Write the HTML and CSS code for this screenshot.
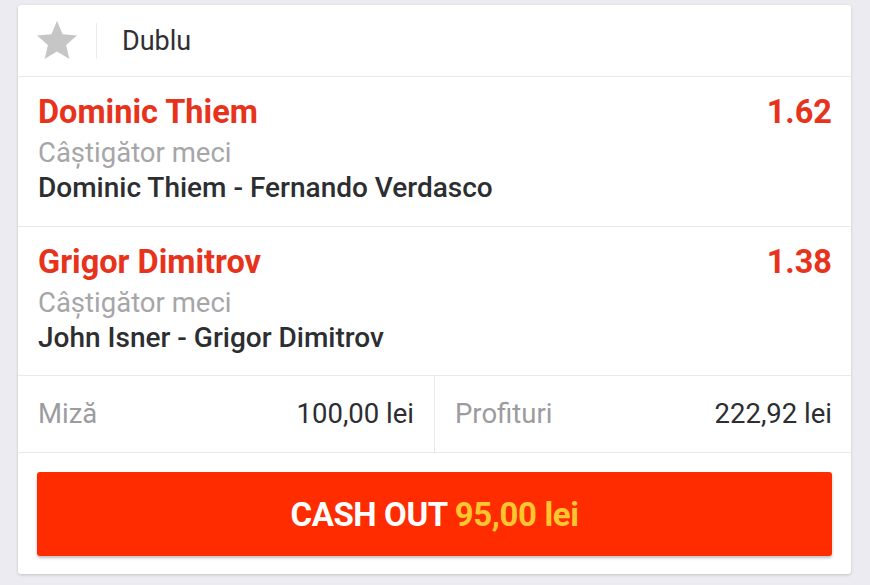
FILE: index.html
```html
<!DOCTYPE html>
<html lang="ro">
<head>
    <meta charset="UTF-8">
    <meta name="viewport" content="width=device-width, initial-scale=1.0">
    <title>Bilet - Dublu</title>
    <link rel="stylesheet" href="styles.css">
</head>
<body>
    <div class="ticket">
        <div class="ticket-head">
            <svg class="fav" width="48" height="48" viewBox="0 0 24 24">
                <path d="M12 17.27L18.18 21l-1.64-7.03L22 9.24l-7.19-.61L12 2 9.19 8.63 2 9.24l5.46 4.73L5.82 21z"/>
            </svg>
            <span class="sep"></span>
            <span class="type">Dublu</span>
        </div>

        <div class="pick">
            <div class="pick-top">
                <span class="pick-name">Dominic Thiem</span>
                <span class="pick-odd">1.62</span>
            </div>
            <div class="market">Câștigător meci</div>
            <div class="event">Dominic Thiem - Fernando Verdasco</div>
        </div>

        <div class="pick">
            <div class="pick-top">
                <span class="pick-name">Grigor Dimitrov</span>
                <span class="pick-odd">1.38</span>
            </div>
            <div class="market">Câștigător meci</div>
            <div class="event">John Isner - Grigor Dimitrov</div>
        </div>

        <div class="totals">
            <div class="cell">
                <span class="label">Miză</span>
                <span class="value">100,00 lei</span>
            </div>
            <div class="cell">
                <span class="label">Profituri</span>
                <span class="value">222,92 lei</span>
            </div>
        </div>

        <div class="actions">
            <button class="cashout">CASH OUT <span class="amount">95,00 lei</span></button>
        </div>
    </div>
</body>
</html>
```

FILE: styles.css
```css
body {
    margin: 0;
    padding: 5px 19px 8px 18px;
    background-color: #ebebf1;
    font-family: Roboto, "Liberation Sans", sans-serif;
}

.ticket {
    background: #fff;
    border-radius: 3px;
    box-shadow: 0 1px 3px rgba(0, 0, 0, 0.18);
}

.ticket-head {
    display: flex;
    align-items: center;
    height: 71px;
    padding-left: 15px;
}

.fav {
    fill: #c6c6c6;
}

.sep {
    width: 1px;
    height: 36px;
    margin: 0 25px 0 15px;
    background: #ebebeb;
}

.type {
    font-size: 27px;
    color: #2f3033;
}

.pick {
    border-top: 1px solid #e9e9ec;
    padding: 12px 19px 21px 20px;
}

.pick + .pick {
    padding-bottom: 20px;
}

.pick-top {
    display: flex;
    justify-content: space-between;
    line-height: 46px;
    font-size: 32.5px;
    font-weight: 700;
    color: #e8331c;
}

.market {
    font-size: 27.5px;
    line-height: 35px;
    color: #a6a6a8;
}

.event {
    font-size: 28px;
    line-height: 35px;
    font-weight: 500;
    color: #2c2e31;
}

.totals {
    display: grid;
    grid-template-columns: 416px 1fr;
    border-top: 1px solid #e9e9ec;
    border-bottom: 1px solid #e9e9ec;
}

.cell {
    display: flex;
    justify-content: space-between;
    padding: 0 20px;
    line-height: 76px;
    font-size: 27.5px;
}

.cell + .cell {
    border-left: 1px solid #e9e9ec;
    padding-right: 19px;
}

.label {
    color: #9c9c9f;
}

.value {
    color: #2c2e31;
}

.actions {
    padding: 19px 19px 18px 19px;
}

.cashout {
    display: block;
    width: 100%;
    height: 84px;
    border: none;
    border-radius: 3px;
    background: #ff2c00;
    box-shadow: 0 2px 3px rgba(0, 0, 0, 0.25);
    font-family: inherit;
    font-size: 33px;
    font-weight: 700;
    letter-spacing: -0.4px;
    color: #fff;
}

.amount {
    color: #ffc62e;
}
```
